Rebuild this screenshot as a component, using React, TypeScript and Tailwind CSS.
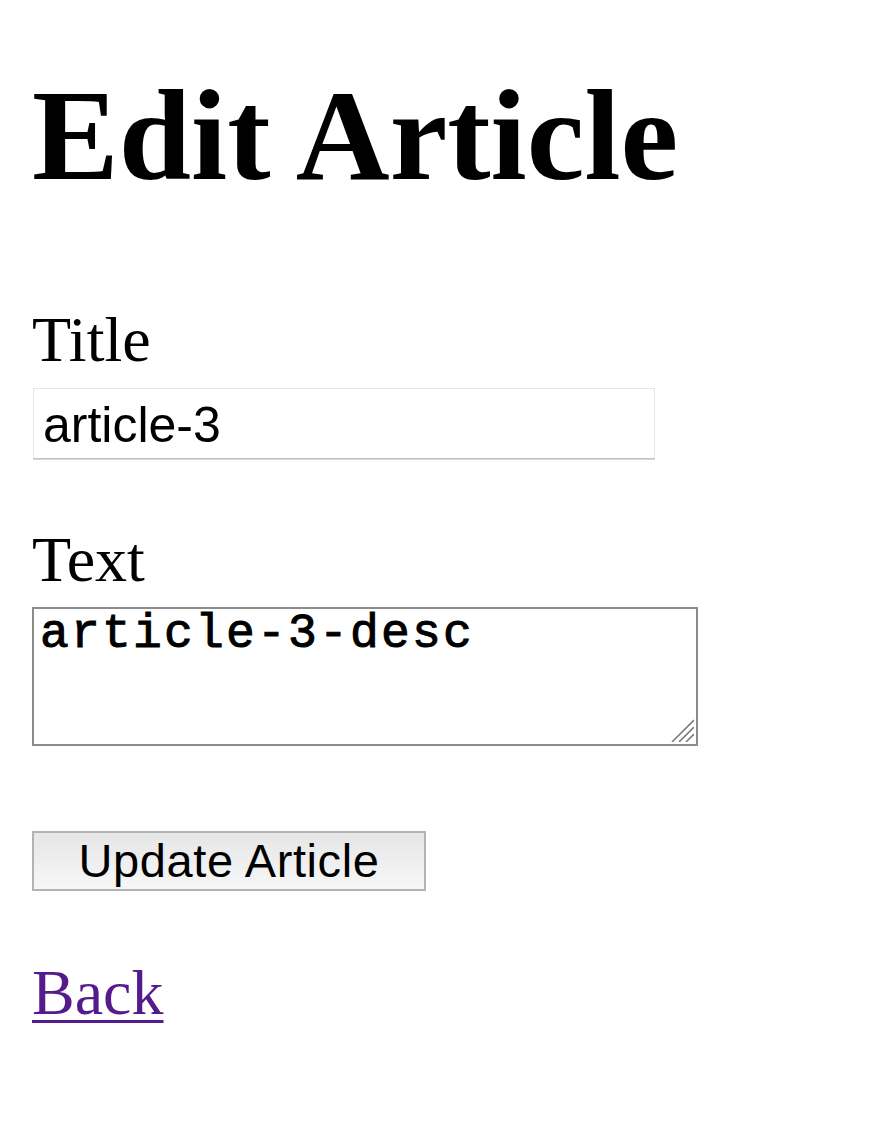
import React from "react";

export default function App() {
  return (
    <div className="min-h-[1132px] bg-white pl-[32px] pt-[71px] text-black">
      <h1 className="m-0 h-[128px] text-[130px] leading-[128px] font-bold font-['Liberation_Serif',serif] whitespace-nowrap">
        Edit Article
      </h1>
      <form className="m-0" onSubmit={(e) => e.preventDefault()}>
        <div className="mt-[109px] h-[64px] text-[64px] leading-[64px] font-['Liberation_Serif',serif]">
          Title
        </div>
        <div className="mt-[16px] ml-[1px]">
          <input
            type="text"
            defaultValue="article-3"
            className="block h-[71px] w-[622px] border border-[#e6e6e6] border-b-[#c2c2c2] bg-white px-[9px] pt-[2px] text-[50px] leading-[60px] font-['Liberation_Sans',sans-serif] text-black outline-none shadow-[0_1px_0_#d8d8d8]"
          />
        </div>
        <div className="mt-[69px] h-[64px] text-[64px] leading-[64px] font-['Liberation_Serif',serif]">
          Text
        </div>
        <div className="relative mt-[15px] h-[139px] w-[666px]">
          <textarea
            defaultValue="article-3-desc"
            className="block h-[139px] w-[666px] resize-none border-2 border-[#8c8c8c] bg-white px-[6px] pt-0 text-[48px] leading-[50px] tracking-[2.2px] font-normal font-['Liberation_Mono',monospace] text-black outline-none [-webkit-text-stroke:1px_black]"
          />
          <svg
            className="pointer-events-none absolute right-[4px] bottom-[4px]"
            width="24"
            height="24"
            viewBox="0 0 24 24"
          >
            <line x1="2" y1="24" x2="24" y2="2" stroke="#7a7a7a" strokeWidth="1.6" />
            <line x1="9" y1="24" x2="24" y2="9" stroke="#7a7a7a" strokeWidth="1.6" />
            <line x1="16" y1="24" x2="24" y2="16" stroke="#7a7a7a" strokeWidth="1.6" />
          </svg>
        </div>
        <div className="mt-[85px]">
          <button
            type="submit"
            className="block h-[60px] w-[394px] border-2 border-[#b3b3b3] bg-gradient-to-b from-[#e6e6e6] to-[#f7f7f7] text-[47px] leading-[56px] tracking-[0.6px] font-['Liberation_Sans',sans-serif] text-black"
          >
            Update Article
          </button>
        </div>
      </form>
      <div className="mt-[70px] h-[64px] text-[64px] leading-[64px] font-['Liberation_Serif',serif]">
        <a href="#" className="text-[#551a8b] underline decoration-[3px] underline-offset-[6px]">
          Back
        </a>
      </div>
    </div>
  );
}
